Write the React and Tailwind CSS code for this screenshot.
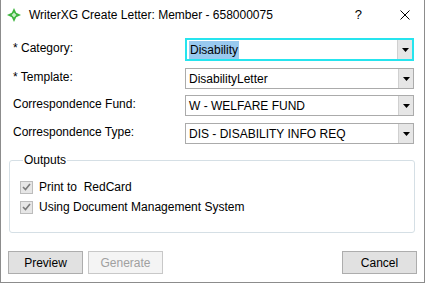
import React from 'react';

const font = { fontFamily: '"Liberation Sans", Arial, sans-serif' };

const AppIcon = () => (
  <svg width="14" height="14" viewBox="0 0 14 14">
    <path d="M7 0 L9.2 4.8 L14 7 L9.2 9.2 L7 14 L4.8 9.2 L0 7 L4.8 4.8 Z" fill="#3fb53f" />
    <path d="M7 4.6 L9.4 7 L7 9.4 L4.6 7 Z" fill="#c9efc9" />
  </svg>
);

const Arrow = () => (
  <div className="w-[15px] h-full flex items-center justify-center bg-[#e6e6e6] border-l border-[#d0d0d0]">
    <svg width="7" height="4" viewBox="0 0 7 4">
      <path d="M0 0 H7 L3.5 4 Z" fill="#000" />
    </svg>
  </div>
);

const Select = ({ value, focused }) => (
  <div
    className={`flex items-stretch w-[229px] bg-white ${
      focused ? 'h-[23px] border-2 border-[#26e4ee]' : 'h-[21px] border border-[#ababab]'
    }`}
  >
    <div className="flex-1 flex items-center pl-[2px] text-[12px] text-black">
      {focused ? <span className="bg-[#99c9ef] px-[1px]">{value}</span> : <span className="px-[1px]">{value}</span>}
    </div>
    <Arrow />
  </div>
);

const Row = ({ label, value, focused, className = '' }) => (
  <div className={`flex items-center ${className}`}>
    <div className="w-[184px] shrink-0 pl-[12px] text-[12px] text-black -mt-[4px]">{label}</div>
    <Select value={value} focused={focused} />
  </div>
);

const Check = ({ label }) => (
  <div className="flex items-center h-[20px]">
    <div className="w-[13px] h-[13px] border border-[#bcbcbc] bg-[#e6e6e6] flex items-center justify-center">
      <svg width="9" height="8" viewBox="0 0 9 8">
        <path d="M1 4 L3.5 6.5 L8 1" fill="none" stroke="#7a7a7a" strokeWidth="1.6" />
      </svg>
    </div>
    <span className="ml-[6px] text-[12px] text-black whitespace-pre">{label}</span>
  </div>
);

const Button = ({ children, disabled }) => (
  <button
    className={`w-[75px] h-[23px] text-[12px] border ${
      disabled ? 'bg-[#f4f4f4] border-[#c8c8c8] text-[#a0a0a0]' : 'bg-[#e1e1e1] border-[#adadad] text-black'
    }`}
  >
    {children}
  </button>
);

export default function App() {
  return (
    <div style={font} className="w-[425px] h-[283px] bg-white border-x border-b border-[#8c8c8c] flex flex-col">
      <div className="h-[30px] flex items-center pl-[6px] pr-[14px]">
        <AppIcon />
        <span className="ml-[8px] text-[12px] text-black">WriterXG Create Letter: Member - 658000075</span>
        <span className="ml-auto text-[13px] text-black">?</span>
        <svg className="ml-[38px]" width="10" height="10" viewBox="0 0 10 10">
          <path d="M0.5 0.5 L9.5 9.5 M9.5 0.5 L0.5 9.5" stroke="#000" strokeWidth="1" />
        </svg>
      </div>

      <Row className="mt-[8px]" label="* Category:" value="Disability" focused />
      <Row className="mt-[7px]" label="* Template:" value="DisabilityLetter" />
      <Row className="mt-[6px]" label="Correspondence Fund:" value="W - WELFARE FUND" />
      <Row className="mt-[7px]" label="Correspondence Type:" value="DIS - DISABILITY INFO REQ" />

      <fieldset className="mt-[8px] ml-[8px] w-[406px] h-[81px] border border-[#d5dfe5] rounded-[3px] pl-[10px] pt-[9px]">
        <legend className="ml-[3px] px-[1px] text-[12px] leading-[16px] text-black">Outputs</legend>
        <Check label="Print to  RedCard" />
        <Check label="Using Document Management System" />
      </fieldset>

      <div className="mt-auto flex items-center pl-[7px] pr-[7px] pb-[8px] gap-[5px]">
        <Button>Preview</Button>
        <Button disabled>Generate</Button>
        <div className="flex-1" />
        <Button>Cancel</Button>
      </div>
    </div>
  );
}
